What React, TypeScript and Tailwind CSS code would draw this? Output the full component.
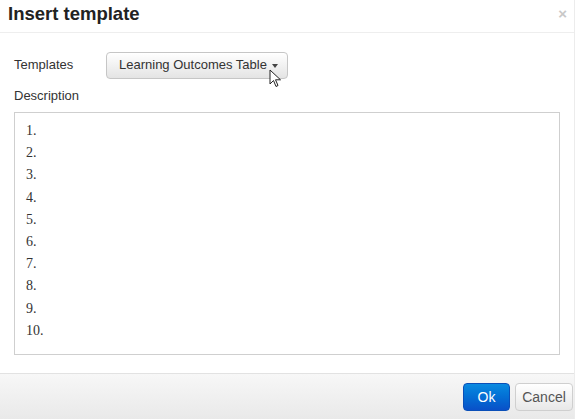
import React from "react";

const items = ["1.", "2.", "3.", "4.", "5.", "6.", "7.", "8.", "9.", "10."];

function Cursor() {
  return (
    <svg
      className="absolute left-[163px] top-[17px]"
      width="13"
      height="20"
      viewBox="0 0 13 20"
    >
      <path
        d="M1 1 L1 15 L4.5 11.5 L7 17.5 L9 16.5 L6.5 10.8 L11.5 10.8 Z"
        fill="#ffffff"
        stroke="#222"
        strokeWidth="1"
        strokeLinejoin="round"
      />
    </svg>
  );
}

export default function App() {
  return (
    <div className="w-[575px] h-[419px] bg-white flex flex-col border-r border-[#ececec] font-['Liberation_Sans',Arial,sans-serif] text-[#333]">
      <div className="h-[33px] shrink-0 border-b border-[#eee] flex items-center justify-between pl-[8px] pr-[7px]">
        <h1 className="text-[18.5px] font-bold text-[#222] leading-none -mt-[3px]">Insert template</h1>
        <span className="text-[15px] font-bold text-[#c8c8c8] leading-none -mt-[5px]">×</span>
      </div>

      <div className="flex-1 flex flex-col px-[14px] pt-[18px]">
        <div className="flex items-center h-[28px]">
          <span className="text-[13px] w-[92px]">Templates</span>
          <div className="relative">
            <button className="h-[27px] w-[182px] flex items-center pl-[12px] pr-[8px] rounded-[4px] border border-[#c6c6c6] bg-gradient-to-b from-white to-[#e4e4e4] shadow-[inset_0_1px_0_rgba(255,255,255,0.6)] text-[13px] text-[#333]">
              <span>Learning Outcomes Table</span>
              <span className="ml-[5px] mt-[1px] w-0 h-0 border-l-[3.5px] border-r-[3.5px] border-t-[4px] border-l-transparent border-r-transparent border-t-[#444]" />
            </button>
            <Cursor />
          </div>
        </div>

        <div className="text-[13px] mt-[9px] leading-[16px]">Description</div>

        <div className="mt-[8px] h-[243px] border border-[#cfcfcf] pl-[11px] pt-[7px] font-['Liberation_Serif','Times_New_Roman',serif] text-[14px] leading-[22.2px] text-[#333]">
          {items.map((n) => (
            <div key={n}>{n}</div>
          ))}
        </div>
      </div>

      <div className="h-[46px] shrink-0 border-t border-[#e2e2e2] bg-gradient-to-b from-[#f7f7f7] to-[#e9e9e9] flex items-center justify-end gap-[5px] pr-[1px] pt-[1px]">
        <button className="h-[28px] w-[47px] rounded-[4px] border border-[#0a4fb8] bg-gradient-to-b from-[#0a8ae0] to-[#0a50c8] text-white text-[14px]">
          Ok
        </button>
        <button className="h-[28px] w-[58px] rounded-[4px] border border-[#cfcfcf] bg-gradient-to-b from-white to-[#e8e8e8] text-[#555] text-[14px]">
          Cancel
        </button>
      </div>
    </div>
  );
}
